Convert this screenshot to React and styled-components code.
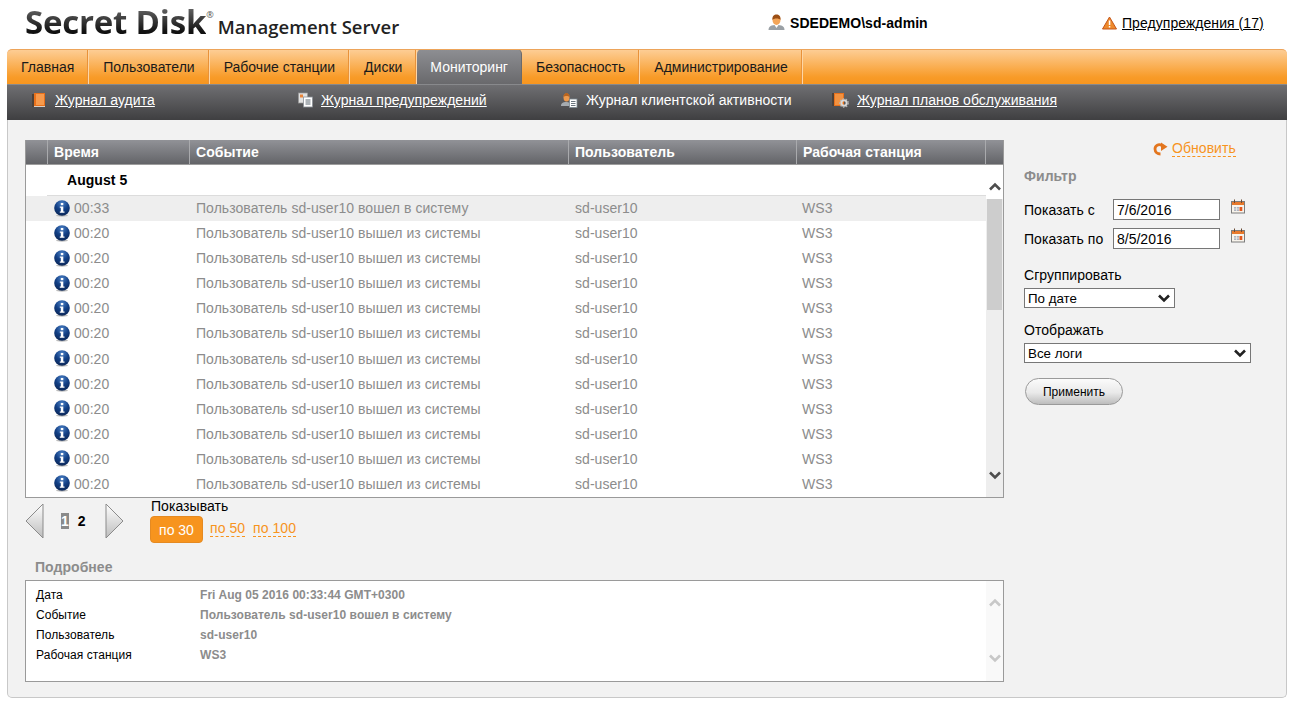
import React from "react";
import styled, { createGlobalStyle } from "styled-components";

const GlobalStyle = createGlobalStyle`
  html, body {
    margin: 0;
    padding: 0;
    background: #fff;
  }
  body {
    font-family: "Liberation Sans", Arial, sans-serif;
    font-size: 14px;
    letter-spacing: 0.05px;
    color: #000;
  }
`;

const tabs = ["Главная", "Пользователи", "Рабочие станции", "Диски", "Мониторинг", "Безопасность", "Администрирование"];

const rows = [
  { time: "00:33", event: "Пользователь sd-user10 вошел в систему", selected: true },
  ...Array.from({ length: 11 }, () => ({ time: "00:20", event: "Пользователь sd-user10 вышел из системы" })),
];

const details = [
  ["Дата", "Fri Aug 05 2016 00:33:44 GMT+0300"],
  ["Событие", "Пользователь sd-user10 вошел в систему"],
  ["Пользователь", "sd-user10"],
  ["Рабочая станция", "WS3"],
];

function BookIcon() {
  return (
    <svg width="16" height="16" viewBox="0 0 16 16">
      <rect x="0" y="2" width="4" height="13" fill="#4f4238" />
      <rect x="2" y="1" width="11" height="13" fill="#e8711c" />
      <rect x="4" y="2" width="8" height="11" fill="#f79a4c" />
      <rect x="2" y="14" width="11" height="1" fill="#d9cfc6" />
    </svg>
  );
}

function DocsIcon() {
  return (
    <svg width="16" height="16" viewBox="0 0 16 16">
      <rect x=".5" y="1" width="9" height="10" fill="#e2e2e2" stroke="#999" strokeWidth="0.7" />
      <rect x="2" y="2.500" width="3" height="3" fill="#e9853a" />
      <rect x="5.500" y="5" width="9" height="10" fill="#fff" stroke="#8a8f96" strokeWidth="0.8" />
      <path d="M7.500 8h5M7.500 10h5M7.500 12h5" stroke="#5b6670" strokeWidth="1" />
    </svg>
  );
}

function UserDocIcon() {
  return (
    <svg width="18" height="16" viewBox="0 0 18 16">
      <path d="M0 14c0-3 2-4 5-4s5 1 5 4z" fill="#a5abb0" />
      <ellipse cx="5.500" cy="5.500" rx="3" ry="4" fill="#ee9a4d" />
      <path d="M2.500 5c0-3 1.500-4 3-4s3 1 3 4c-1-1.500-5-1.500-6 0z" fill="#b8641f" />
      <rect x="8.500" y="7" width="7.500" height="8.500" fill="#fff" stroke="#7b8790" strokeWidth="0.8" />
      <path d="M10 9.500h4.500M10 11.500h4.500M10 13.500h4.500" stroke="#5b6670" strokeWidth="0.9" />
    </svg>
  );
}

function BookGearIcon() {
  return (
    <svg width="18" height="16" viewBox="0 0 18 16">
      <rect x="0" y="1" width="3" height="13" fill="#4f4238" />
      <rect x="2" y="1" width="10" height="13" fill="#e8711c" />
      <rect x="3" y="2" width="8" height="11" fill="#f39240" />
      <circle cx="12" cy="11" r="2.700" fill="none" stroke="#d8d8d8" strokeWidth="2" />
      <circle cx="12" cy="11" r="4.200" fill="none" stroke="#b5b5b5" strokeWidth="1.300" strokeDasharray="1.500 1.500" />
    </svg>
  );
}

function PersonIcon() {
  return (
    <svg width="17" height="17" viewBox="0 0 17 17">
      <path d="M.5 16c0-4 3-5 8-5s8 1 8 5z" fill="#9aa0a5" />
      <path d="M6.500 11l2 3 2-3z" fill="#fff" />
      <ellipse cx="8.500" cy="6" rx="4" ry="5" fill="#f3a558" />
      <path d="M4.500 6c-.5-3.800 1.700-5.500 4-5.500s4.500 1.700 4 5.500c-1-2-7-2-8 0z" fill="#9c4f15" />
    </svg>
  );
}

function WarningIcon() {
  return (
    <svg width="15" height="14" viewBox="0 0 15 14">
      <path d="M7.500 1L14.500 13H.5z" fill="#ee8a2c" stroke="#c4561a" strokeWidth="1" strokeLinejoin="round" />
      <rect x="6.800" y="4.500" width="1.500" height="4.500" fill="#fff" />
      <rect x="6.800" y="10" width="1.500" height="1.500" fill="#fff" />
    </svg>
  );
}

function InfoIcon() {
  return (
    <svg width="16" height="17" viewBox="0 0 16 17">
      <defs>
        <radialGradient id="infoGlow" cx="50%" cy="20%" r="85%">
          <stop offset="0%" stopColor="#4a7fc4" />
          <stop offset="50%" stopColor="#123f85" />
          <stop offset="100%" stopColor="#0a2350" />
        </radialGradient>
      </defs>
      <ellipse cx="8" cy="15.500" rx="6" ry="1.200" fill="#bdbdbd" />
      <circle cx="8" cy="8" r="7.800" fill="url(#infoGlow)" />
      <rect x="6.800" y="3" width="2.500" height="2.200" fill="#fff" />
      <path d="M5.800 6.500h3.500v5h1.200v1.300H5.800v-1.300h1v-3.700h-1z" fill="#fff" />
    </svg>
  );
}

function RefreshIcon() {
  return (
    <svg width="15" height="14" viewBox="0 0 15 14">
      <path d="M9 3.500C5.500 1.500 2 3.500 2 7c0 3 2.500 5 5.500 5" fill="none" stroke="#e3761f" strokeWidth="2.800" />
      <path d="M8 .5l6.500 4.300L8 9z" fill="#e3761f" />
      <circle cx="6.500" cy="7.500" r="1.500" fill="#f2f2f2" />
    </svg>
  );
}

function CalendarIcon() {
  return (
    <svg width="14" height="15" viewBox="0 0 14 15">
      <rect x=".5" y="2.500" width="13" height="11.500" fill="#f8f4ec" stroke="#7d7d7d" strokeWidth="1" />
      <rect x="1" y="3" width="12" height="3" fill="#e8792c" />
      <path d="M3.500 .5v3.500M10.500 .5v3.500" stroke="#6b4a33" strokeWidth="1" />
      <rect x="3" y="8" width="5" height="4" fill="#aeb4c0" />
      <path d="M5.500 8v4M3 10h5" stroke="#f8f4ec" strokeWidth="0.7" />
      <rect x="8.500" y="8" width="2.800" height="4" fill="#e4581f" />
    </svg>
  );
}

function Chevron({ up, color = "#4d4d4d", size = 12, weight = 2.6 }) {
  return (
    <svg width={size} height="9" viewBox="0 0 12 9">
      <path d={up ? "M1 7.500L6 2.500l5 5" : "M1 1.500l5 5 5-5"} fill="none" stroke={color} strokeWidth={weight} />
    </svg>
  );
}

function PagerArrow({ left }) {
  const id = left ? "arrowFillL" : "arrowFillR";
  return (
    <svg width="19" height="36" viewBox="0 0 19 36">
      <defs>
        <linearGradient id={id} x1="0" y1="0" x2="0" y2="1">
          <stop offset="0%" stopColor="#ffffff" />
          <stop offset="100%" stopColor="#bdbdbd" />
        </linearGradient>
      </defs>
      <path d={left ? "M18 1L1 18l17 17z" : "M1 1l17 17L1 35z"} fill={`url(#${id})`} stroke="#8b8b8b" strokeWidth="1" />
    </svg>
  );
}

export default function App() {
  return (
    <Page>
      <GlobalStyle />
      <Header>
        <Logo>
          <LogoMain>Secret Disk</LogoMain>
          <LogoMark>®</LogoMark>
          <LogoSub>Management Server</LogoSub>
        </Logo>
        <UserBlock>
          <PersonIcon />
          <span>SDEDEMO\sd-admin</span>
        </UserBlock>
        <WarningBlock>
          <WarningIcon />
          <a href="#warnings">Предупреждения (17)</a>
        </WarningBlock>
      </Header>

      <TabBar>
        {tabs.map((tab) => (
          <Tab key={tab} $active={tab === "Мониторинг"}>{tab}</Tab>
        ))}
      </TabBar>

      <SubNav>
        <SubItem href="#audit"><BookIcon /><span>Журнал аудита</span></SubItem>
        <SubItem href="#warn"><DocsIcon /><span>Журнал предупреждений</span></SubItem>
        <SubItem href="#client" $plain><UserDocIcon /><span>Журнал клиентской активности</span></SubItem>
        <SubItem href="#plans"><BookGearIcon /><span>Журнал планов обслуживания</span></SubItem>
      </SubNav>

      <Panel>
        <MainColumn>
          <LogTable>
            <HeadRow>
              <HeadCell />
              <HeadCell>Время</HeadCell>
              <HeadCell>Событие</HeadCell>
              <HeadCell>Пользователь</HeadCell>
              <HeadCell>Рабочая станция</HeadCell>
              <HeadCell />
            </HeadRow>
            <TableBody>
              <RowList>
                <GroupRow>August 5</GroupRow>
                {rows.map((row, index) => (
                  <LogRow key={index} $selected={row.selected}>
                    <TimeCell><InfoIcon /><span>{row.time}</span></TimeCell>
                    <LogCell>{row.event}</LogCell>
                    <LogCell>sd-user10</LogCell>
                    <LogCell>WS3</LogCell>
                  </LogRow>
                ))}
              </RowList>
              <Scrollbar>
                <ScrollUp><Chevron up /></ScrollUp>
                <ScrollTrack>
                  <ScrollThumb />
                  <ScrollDown><Chevron /></ScrollDown>
                </ScrollTrack>
              </Scrollbar>
            </TableBody>
          </LogTable>

          <PagerRow>
            <PagerArrow left />
            <Pages>
              <PageNumber $current>1</PageNumber>
              <PageNumber>2</PageNumber>
            </Pages>
            <PagerArrow />
            <PageSize>
              <PageSizeLabel>Показывать</PageSizeLabel>
              <PageSizeOptions>
                <SizeButton>по 30</SizeButton>
                <DashedLink href="#50">по 50</DashedLink>
                <DashedLink href="#100">по 100</DashedLink>
              </PageSizeOptions>
            </PageSize>
          </PagerRow>

          <SectionTitle $indent>Подробнее</SectionTitle>
          <DetailsBox>
            <DetailsList>
              {details.map(([label, value]) => (
                <DetailRow key={label}>
                  <DetailLabel>{label}</DetailLabel>
                  <DetailValue>{value}</DetailValue>
                </DetailRow>
              ))}
            </DetailsList>
            <DetailsScroll>
              <Chevron up color="#c8c8c8" />
              <Chevron color="#c8c8c8" />
            </DetailsScroll>
          </DetailsBox>
        </MainColumn>

        <Sidebar>
          <RefreshRow>
            <RefreshIcon />
            <DashedLink href="#refresh">Обновить</DashedLink>
          </RefreshRow>
          <SectionTitle>Фильтр</SectionTitle>
          <DateRow>
            <DateLabel>Показать с</DateLabel>
            <DateInput defaultValue="7/6/2016" />
            <CalendarIcon />
          </DateRow>
          <DateRow>
            <DateLabel>Показать по</DateLabel>
            <DateInput defaultValue="8/5/2016" />
            <CalendarIcon />
          </DateRow>
          <FieldLabel $first>Сгруппировать</FieldLabel>
          <SelectBox $width={151}>
            <select defaultValue="date"><option value="date">По дате</option></select>
            <SelectArrow><Chevron color="#222" /></SelectArrow>
          </SelectBox>
          <FieldLabel>Отображать</FieldLabel>
          <SelectBox $width={227}>
            <select defaultValue="all"><option value="all">Все логи</option></select>
            <SelectArrow><Chevron color="#222" /></SelectArrow>
          </SelectBox>
          <ApplyButton>Применить</ApplyButton>
        </Sidebar>
      </Panel>
    </Page>
  );
}

const Page = styled.div`
  width: 1280px;
  margin: 0 7px;
`;

const Header = styled.header`
  display: grid;
  grid-template-columns: 761px 334px 1fr;
  align-items: center;
  height: 49px;
`;

const Logo = styled.div`
  display: flex;
  align-items: flex-start;
  padding: 0 0 0 18px;
  height: 49px;
  white-space: nowrap;
`;

const LogoMain = styled.span`
  font-family: "Open Sans", sans-serif;
  font-weight: 700;
  font-size: 33px;
  line-height: 44px;
  letter-spacing: -0.2px;
  background: linear-gradient(180deg, #5e5e5e 22%, #111 72%);
  -webkit-background-clip: text;
  background-clip: text;
  color: transparent;
`;

const LogoMark = styled.span`
  font-family: "Open Sans", sans-serif;
  font-size: 9px;
  line-height: 12px;
  margin-top: 9px;
  color: #555;
`;

const LogoSub = styled.span`
  font-family: "Open Sans", sans-serif;
  font-weight: 600;
  font-size: 18.500px;
  line-height: 24px;
  margin: 15px 0 0 4px;
  color: #222;
`;

const UserBlock = styled.div`
  display: flex;
  align-items: center;
  gap: 5px;
  font-weight: 700;
  font-size: 14px;
  margin-top: -4px;
`;

const WarningBlock = styled.div`
  display: flex;
  align-items: center;
  gap: 5px;
  margin-top: -4px;

  a {
    color: #000;
  }
`;

const TabBar = styled.nav`
  display: flex;
  height: 35px;
  box-sizing: border-box;
  background: linear-gradient(180deg, #fdcd94 0%, #f89b28 80%, #f7961f 100%);
  border-top: 1px solid #eda45a;
  border-radius: 5px 5px 0 0;
  overflow: hidden;
`;

const Tab = styled.div`
  display: flex;
  align-items: center;
  box-sizing: border-box;
  margin-top: ${(p) => (p.$active ? "-1px" : "0")};
  height: ${(p) => (p.$active ? "35px" : "34px")};
  padding: ${(p) => (p.$active ? "0 13px" : "0 14px")};
  letter-spacing: 0;
  color: ${(p) => (p.$active ? "#fff" : "#1a1a1a")};
  background: ${(p) => (p.$active ? "linear-gradient(180deg, #8e8f93 0%, #69696c 100%)" : "transparent")};
  border-right: 1px solid ${(p) => (p.$active ? "#6a6a6c" : "#fdd6a6")};
  box-shadow: inset -1px 0 0 ${(p) => (p.$active ? "transparent" : "#e8923a")};
  border-radius: ${(p) => (p.$active ? "5px 5px 0 0" : "0")};
`;

const SubNav = styled.div`
  display: grid;
  grid-template-columns: 266px 263px 271px 1fr;
  align-items: center;
  height: 36px;
  box-sizing: border-box;
  padding: 0 0 5px 25px;
  background: linear-gradient(180deg, #6f6f72 0%, #3f3f41 100%);
  border-top: 1px solid #88898c;
`;

const SubItem = styled.a`
  display: flex;
  align-items: center;
  gap: 7px;
  color: #fff;
  text-decoration: none;

  span {
    text-decoration: ${(p) => (p.$plain ? "none" : "underline")};
  }
`;

const Panel = styled.main`
  display: grid;
  grid-template-columns: 979px 1fr;
  gap: 20px;
  height: 578px;
  box-sizing: border-box;
  padding: 20px 0 0 17px;
  background: #f2f2f2;
  border: 1px solid #c8c8c8;
  border-top: none;
  border-radius: 0 0 5px 5px;
`;

const MainColumn = styled.section`
  display: flex;
  flex-direction: column;
  min-width: 0;
`;

const LogTable = styled.div`
  height: 358px;
  box-sizing: border-box;
  display: flex;
  flex-direction: column;
  border: 1px solid #9a9a9a;
  border-top: none;
  background: #fff;
  overflow: hidden;
`;

const HeadRow = styled.div`
  display: grid;
  grid-template-columns: 21px 142px 379px 228px 189px 1fr;
  height: 25px;
  flex: none;
  box-sizing: border-box;
  background: linear-gradient(180deg, #919297 0%, #636468 100%);
  border-bottom: 1px solid #9d9d9d;
`;

const HeadCell = styled.div`
  display: flex;
  align-items: center;
  padding-left: 6px;
  color: #fff;
  font-weight: 700;
  white-space: nowrap;

  & + & {
    border-left: 1px solid #a9aaad;
  }
`;

const TableBody = styled.div`
  flex: 1;
  display: flex;
  min-height: 0;
`;

const RowList = styled.div`
  width: 960px;
  flex: none;
  overflow: hidden;
`;

const GroupRow = styled.div`
  height: 31px;
  line-height: 30px;
  box-sizing: border-box;
  margin-left: 21px;
  padding-left: 20px;
  font-weight: 700;
  border-bottom: 1px solid #dcdcdc;
`;

const LogRow = styled.div`
  display: grid;
  grid-template-columns: 163px 379px 227px 1fr;
  align-items: center;
  height: 25.0875px;
  box-sizing: border-box;
  padding-bottom: 1px;
  background: ${(p) => (p.$selected ? "#eeeeee" : "#fff")};
  color: #8c8c8c;
`;

const TimeCell = styled.div`
  display: flex;
  align-items: center;
  gap: 4px;
  padding-left: 28px;
`;

const LogCell = styled.div`
  padding-left: 7px;
  white-space: nowrap;
`;

const Scrollbar = styled.div`
  flex: 1;
  display: flex;
  flex-direction: column;
`;

const ScrollUp = styled.div`
  flex: none;
  height: 34px;
  box-sizing: border-box;
  padding-top: 17px;
  display: flex;
  justify-content: center;
`;

const ScrollTrack = styled.div`
  flex: 1;
  display: flex;
  flex-direction: column;
  justify-content: space-between;
  align-items: center;
  background: #eeeeee;
`;

const ScrollThumb = styled.div`
  width: 15px;
  height: 111px;
  background: #cdcdcd;
`;

const ScrollDown = styled.div`
  height: 26px;
  display: flex;
  justify-content: center;
`;

const PagerRow = styled.div`
  display: flex;
  align-items: flex-start;
  height: 56px;
  margin-top: 5px;
`;

const Pages = styled.div`
  display: flex;
  align-items: center;
  gap: 9px;
  width: 61px;
  height: 36px;
  box-sizing: border-box;
  padding-left: 17px;
`;

const PageNumber = styled.span`
  display: block;
  line-height: 16px;
  font-weight: 700;
  color: ${(p) => (p.$current ? "#fff" : "#000")};
  background: ${(p) => (p.$current ? "#8a8a8a" : "transparent")};
`;

const PageSize = styled.div`
  margin: -5px 0 0 26px;
`;

const PageSizeLabel = styled.div`
  line-height: 16px;
  margin-left: 1px;
`;

const PageSizeOptions = styled.div`
  display: flex;
  align-items: center;
  gap: 8px;
  margin-top: 2px;

  a {
    margin-bottom: 2px;
  }
`;

const SizeButton = styled.button`
  width: 53px;
  height: 27px;
  margin-right: -1px;
  padding: 0;
  font: inherit;
  color: #fff;
  background: #f7941e;
  border: 1px solid #e58a22;
  border-radius: 4px;
`;

const DashedLink = styled.a`
  color: #f7941e;
  text-decoration: none;
  border-bottom: 1px dashed #f7941e;
  line-height: 15px;
`;

const SectionTitle = styled.h3`
  margin: ${(p) => (p.$indent ? "0 0 4px 10px" : "10px 0 0")};
  font-size: 14px;
  line-height: 17px;
  font-weight: 700;
  color: #8c8c8c;
`;

const DetailsBox = styled.div`
  display: flex;
  height: 102px;
  box-sizing: border-box;
  background: #fff;
  border: 1px solid #9a9a9a;
`;

const DetailsList = styled.div`
  width: 960px;
  flex: none;
  padding: 4px 0 0 10px;
  box-sizing: border-box;
`;

const DetailRow = styled.div`
  display: grid;
  grid-template-columns: 164px 1fr;
  height: 20px;
  align-items: center;
  font-size: 12px;
`;

const DetailLabel = styled.span`
  color: #000;
`;

const DetailValue = styled.span`
  color: #8c8c8c;
  font-weight: 700;
`;

const DetailsScroll = styled.div`
  flex: 1;
  display: flex;
  flex-direction: column;
  justify-content: space-between;
  align-items: center;
  padding: 17px 0 18px;
  background: #f9f9f9;
`;

const Sidebar = styled.aside`
  display: flex;
  flex-direction: column;
  align-items: flex-start;
`;

const RefreshRow = styled.div`
  display: flex;
  align-items: center;
  gap: 4px;
  height: 18px;
  padding-left: 129px;
`;

const DateRow = styled.div`
  display: grid;
  grid-template-columns: 89px 107px 14px;
  align-items: center;
  height: 21px;
  margin-top: 8px;

  h3 + & {
    margin-top: 14px;
  }

  svg {
    margin: -6px 0 0 11px;
  }
`;

const DateLabel = styled.span`
  white-space: nowrap;
`;

const DateInput = styled.input`
  width: 107px;
  height: 21px;
  box-sizing: border-box;
  padding: 1px 3px;
  font: inherit;
  color: #000;
  background: #fff;
  border: 1px solid #777;
  outline: none;
`;

const FieldLabel = styled.div`
  line-height: 16px;
  margin-top: ${(p) => (p.$first ? "18px" : "14px")};
  margin-bottom: 5px;
`;

const SelectBox = styled.div`
  position: relative;
  width: ${(p) => p.$width}px;
  height: 20px;

  select {
    width: 100%;
    height: 100%;
    box-sizing: border-box;
    padding: 0 3px;
    font-family: inherit;
    font-size: 13.330px;
    color: #000;
    background: #fff;
    border: 1px solid #777;
    border-radius: 0;
    appearance: none;
    outline: none;
  }
`;

const SelectArrow = styled.span`
  position: absolute;
  top: 6px;
  right: 5px;
  display: flex;
  pointer-events: none;
`;

const ApplyButton = styled.button`
  width: 98px;
  height: 27px;
  margin: 15px 0 0 1px;
  padding: 0;
  font-family: inherit;
  font-size: 12px;
  color: #000;
  background: linear-gradient(180deg, #fbfbfb 0%, #e9e9e9 55%, #bdbdbd 100%);
  border: 1px solid #9a9a9a;
  border-radius: 14px;
`;
